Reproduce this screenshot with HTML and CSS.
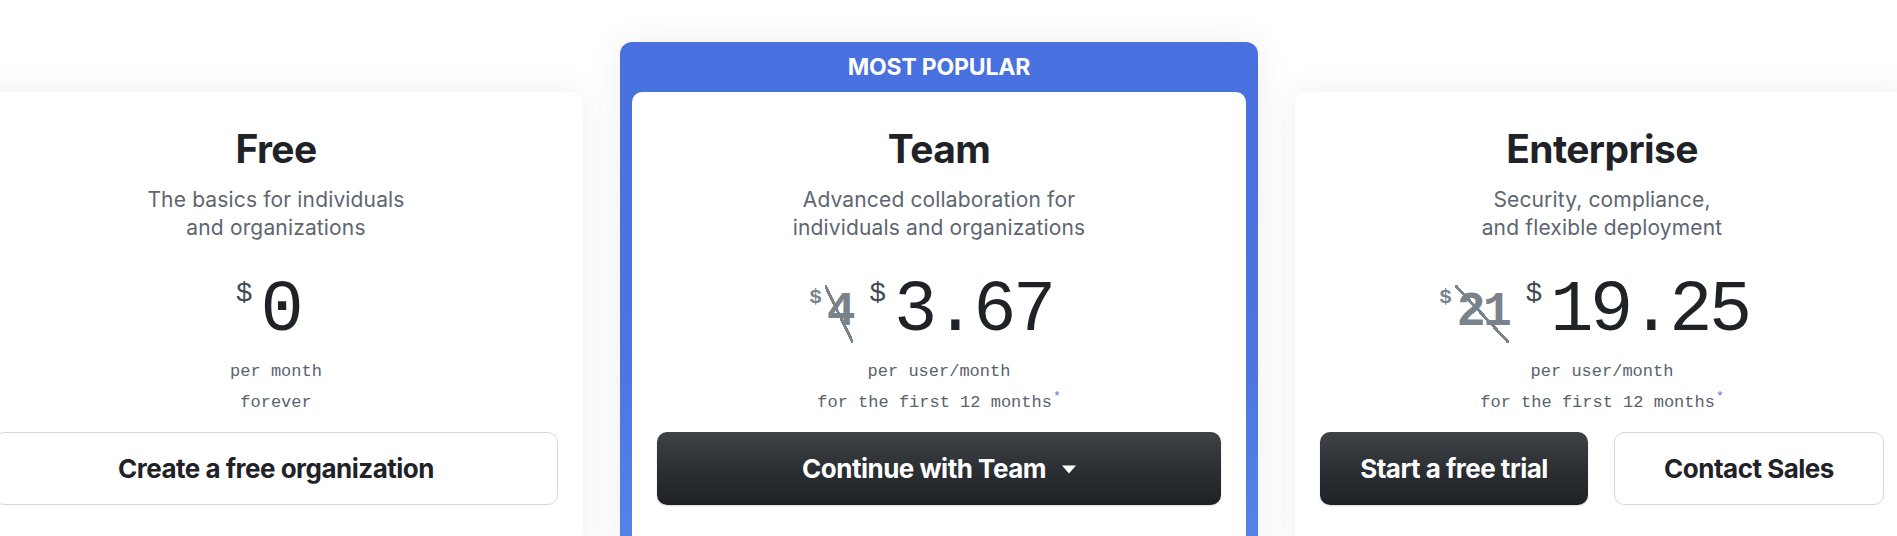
FILE: index.html
```html
<!DOCTYPE html>
<html lang="en">
<head>
<meta charset="utf-8">
<title>Pricing</title>
<link rel="stylesheet" href="styles.css">
</head>
<body>
<main class="plans">
  <section class="card card-side">
    <h2 class="plan-title">Free</h2>
    <p class="plan-desc">The basics for individuals<br>and organizations</p>
    <div class="price">
      <span class="cur">$</span><span class="amount">0</span>
    </div>
    <p class="note">per month</p>
    <p class="note">forever</p>
    <div class="actions">
      <a class="btn btn-light" href="#">Create a free organization</a>
    </div>
  </section>

  <section class="popular">
    <div class="popular-label">MOST POPULAR</div>
    <div class="card card-team">
      <h2 class="plan-title">Team</h2>
      <p class="plan-desc">Advanced collaboration for<br>individuals and organizations</p>
      <div class="price">
        <span class="cur cur-old">$</span><span class="old">4</span>
        <span class="cur">$</span><span class="amount">3.67</span>
      </div>
      <p class="note">per user/month</p>
      <p class="note">for the first 12 months<sup class="star">*</sup></p>
      <div class="actions">
        <a class="btn btn-dark" href="#">Continue with Team
          <svg class="caret" width="14" height="9" viewBox="0 0 14 9" aria-hidden="true"><path d="M0 0.5h14L7 8.5z" fill="#ffffff"/></svg>
        </a>
      </div>
    </div>
  </section>

  <section class="card card-side">
    <h2 class="plan-title">Enterprise</h2>
    <p class="plan-desc">Security, compliance,<br>and flexible deployment</p>
    <div class="price">
      <span class="cur cur-old">$</span><span class="old">21</span>
      <span class="cur">$</span><span class="amount">19.25</span>
    </div>
    <p class="note">per user/month</p>
    <p class="note">for the first 12 months<sup class="star">*</sup></p>
    <div class="actions">
      <a class="btn btn-dark" href="#">Start a free trial</a>
      <a class="btn btn-light" href="#">Contact Sales</a>
    </div>
  </section>
</main>
</body>
</html>
```

FILE: styles.css
```css
html, body {
  margin: 0;
  padding: 0;
  background: #ffffff;
  overflow: hidden;
}

body {
  width: 1897px;
  height: 536px;
  font-family: Inter, "Noto Sans", "Liberation Sans", sans-serif;
  color: #1f2328;
}

.plans {
  display: flex;
  align-items: flex-start;
  gap: 37px;
  margin-left: -31px;
  padding-top: 42px;
  width: 1940px;
}

.card {
  background: #ffffff;
  width: 614px;
  box-sizing: border-box;
  padding: 34px 25px 0;
  height: 460px;
  display: flex;
  flex-direction: column;
  align-items: center;
  text-align: center;
}

.card-side {
  margin-top: 50px;
  border-radius: 12px 12px 0 0;
  box-shadow: 0 0 36px rgba(31, 35, 40, 0.07);
}

.popular {
  width: 638px;
  box-sizing: border-box;
  padding: 0 12px;
  border-radius: 12px 12px 0 0;
  background: linear-gradient(180deg, #4870df 0%, #4c74e2 60%, #5584ea 100%);
  box-shadow: 0 0 36px rgba(31, 35, 40, 0.07);
  height: 520px;
}

.popular-label {
  height: 50px;
  display: flex;
  align-items: center;
  justify-content: center;
  color: #ffffff;
  font-weight: 700;
  font-size: 23px;
  letter-spacing: -0.2px;
}

.card-team {
  border-radius: 10px 10px 0 0;
}

.plan-title {
  margin: 0;
  font-size: 39px;
  line-height: 46px;
  font-weight: 700;
  letter-spacing: -0.6px;
  color: #1f2328;
}

.plan-desc {
  margin: 14px 0 0;
  font-size: 21px;
  line-height: 28px;
  font-weight: 400;
  letter-spacing: 0.15px;
  color: #5d6670;
}

.price {
  margin-top: 41px;
  height: 60px;
  padding-right: 16px;
  display: flex;
  align-items: flex-start;
  justify-content: center;
  font-family: "Liberation Mono", "DejaVu Sans Mono", monospace;
}

.cur {
  font-size: 28px;
  line-height: 26px;
  color: #424a53;
  margin-right: 8px;
  margin-top: -2px;
}

.cur-old {
  font-size: 21px;
  line-height: 18px;
  font-weight: 700;
  color: #7a828b;
  margin-top: 6px;
  margin-right: 5px;
}

.old {
  position: relative;
  font-size: 48px;
  line-height: 46px;
  font-weight: 700;
  letter-spacing: -2.5px;
  color: #7a828b;
  margin-top: 6px;
  margin-right: 16px;
}

.old::after {
  content: "";
  position: absolute;
  left: -2px;
  right: 0;
  top: -4px;
  bottom: -8px;
  background: linear-gradient(to top right,
    transparent calc(50% - 1.5px),
    #7a828b calc(50% - 1.5px),
    #7a828b calc(50% + 1.5px),
    transparent calc(50% + 1.5px));
}

.amount {
  font-size: 72px;
  line-height: 56px;
  letter-spacing: -3.5px;
  color: #1f2328;
}

.note {
  margin: 0;
  font-family: "Liberation Mono", "DejaVu Sans Mono", monospace;
  font-size: 17px;
  line-height: 31px;
  color: #59636e;
}

.price + .note {
  margin-top: 13px;
}

.star {
  color: #5a6ee0;
  font-size: 13px;
  vertical-align: 7px;
  line-height: 0;
  margin-left: 1px;
}

.actions {
  margin-top: 14px;
  width: 100%;
  display: flex;
  gap: 26px;
}

.btn {
  flex: 1;
  height: 73px;
  box-sizing: border-box;
  display: flex;
  align-items: center;
  justify-content: center;
  border-radius: 10px;
  font-size: 26px;
  font-weight: 700;
  letter-spacing: -0.5px;
  text-decoration: none;
}

.btn-light {
  background: #ffffff;
  color: #1f2328;
  border: 1.5px solid #d6d9dc;
}

.btn-dark {
  background: linear-gradient(180deg, #3f4247 0%, #2a2d31 55%, #1f2225 100%);
  color: #ffffff;
  box-shadow: 0 1px 2px rgba(0, 0, 0, 0.15);
}

.caret {
  margin-left: 16px;
  margin-top: 2px;
}
```
